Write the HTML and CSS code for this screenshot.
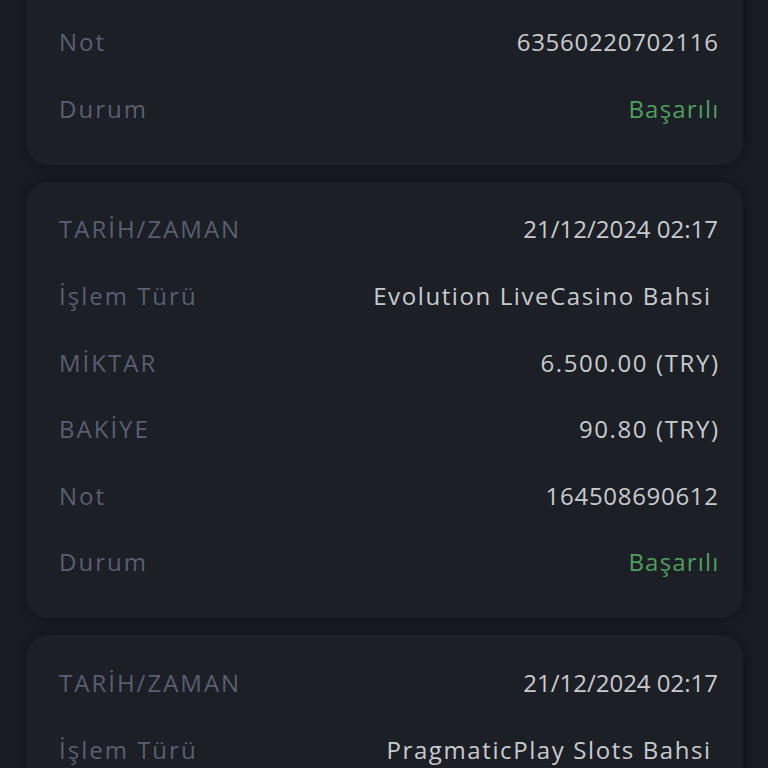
FILE: index.html
```html
<!DOCTYPE html>
<html lang="tr">

<head>
    <meta charset="UTF-8">
    <title>İşlem Geçmişi</title>
    <link rel="stylesheet" href="styles.css">
</head>

<body>

    <div class="history">
        <div class="card">
            <div class="row"><span class="label">TARİH/ZAMAN</span><span class="value date">21/12/2024 02:18</span></div>
            <div class="row"><span class="label">İşlem Türü</span><span class="value">Evolution LiveCasino Kazanç</span></div>
            <div class="row"><span class="label">MİKTAR</span><span class="value">0.00 (TRY)</span></div>
            <div class="row"><span class="label">BAKİYE</span><span class="value">90.80 (TRY)</span></div>
            <div class="row"><span class="label">Not</span><span class="value num">63560220702116</span></div>
            <div class="row"><span class="label">Durum</span><span class="value success">Başarılı</span></div>
        </div>

        <div class="card">
            <div class="row"><span class="label">TARİH/ZAMAN</span><span class="value date">21/12/2024 02:17</span></div>
            <div class="row"><span class="label">İşlem Türü</span><span class="value">Evolution LiveCasino Bahsi&nbsp;</span></div>
            <div class="row"><span class="label">MİKTAR</span><span class="value">6.500.00 (TRY)</span></div>
            <div class="row"><span class="label">BAKİYE</span><span class="value">90.80 (TRY)</span></div>
            <div class="row"><span class="label">Not</span><span class="value num">164508690612</span></div>
            <div class="row"><span class="label">Durum</span><span class="value success">Başarılı</span></div>
        </div>

        <div class="card">
            <div class="row"><span class="label">TARİH/ZAMAN</span><span class="value date">21/12/2024 02:17</span></div>
            <div class="row"><span class="label">İşlem Türü</span><span class="value">PragmaticPlay Slots Bahsi&nbsp;</span></div>
            <div class="row"><span class="label">MİKTAR</span><span class="value">6.590.80 (TRY)</span></div>
            <div class="row"><span class="label">BAKİYE</span><span class="value">6.590.80 (TRY)</span></div>
            <div class="row"><span class="label">Not</span><span class="value num">164508690611</span></div>
            <div class="row"><span class="label">Durum</span><span class="value success">Başarılı</span></div>
        </div>
    </div>

</body>

</html>
```

FILE: styles.css
```css
body {
    margin: 0;
    background: #181b22;
    font-family: "Open Sans", Lato, sans-serif;
    height: 768px;
    overflow: hidden;
}

.history {
    display: flex;
    flex-direction: column;
    gap: 17px;
    padding: 0 25px 0 26px;
    margin-top: -272px;
}

.card {
    background: #1c1f26;
    border-radius: 22px;
    padding: 14px 25px 23px 33px;
    box-shadow: 0 0 10px rgba(10, 12, 16, 0.6);
}

.row {
    display: flex;
    justify-content: space-between;
    align-items: center;
    height: 66.6px;
    font-size: 24px;
}

.label {
    color: #5a5e70;
    letter-spacing: 2px;
}

.value {
    color: #c9cacf;
    white-space: pre;
    letter-spacing: 1.6px;
    margin-right: -1.6px;
}

.value.num {
    letter-spacing: 0.7px;
    margin-right: -0.7px;
}

.value.date {
    letter-spacing: 0;
    margin-right: 0;
}

.success {
    color: #4f9e5f;
    letter-spacing: 1.2px;
}
```
